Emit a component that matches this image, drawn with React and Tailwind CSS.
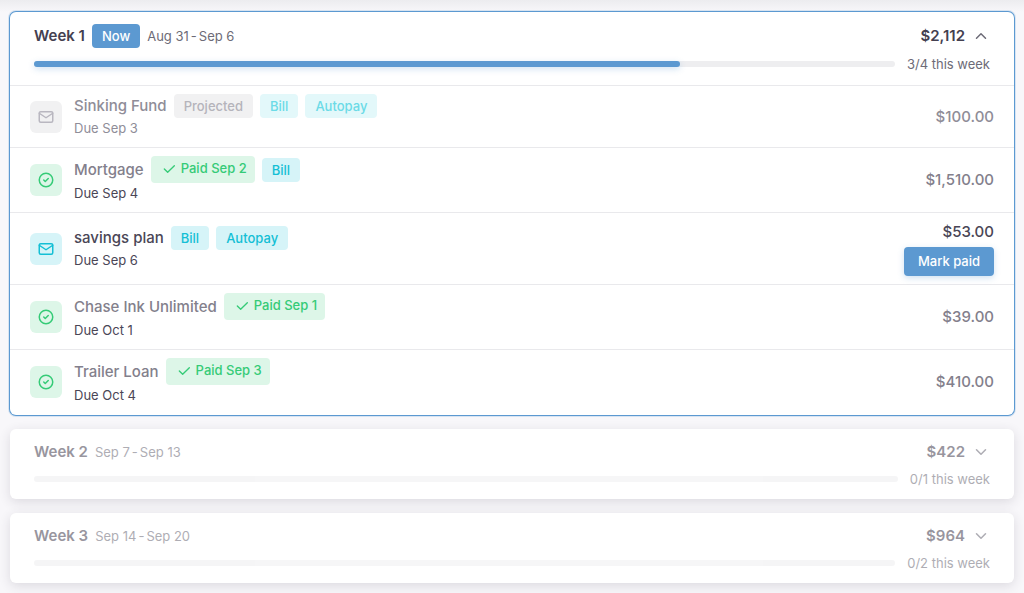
import React from 'react';
import { TbCheck, TbChevronDown, TbChevronUp, TbCircleCheck, TbMail } from 'react-icons/tb';

const weeks = [
  {
    title: 'Week 1',
    start: 'Aug 31',
    end: 'Sep 6',
    total: '$2,112',
    paid: 3,
    count: 4,
    current: true,
    items: [
      { name: 'Sinking Fund', due: 'Due Sep 3', amount: '$100.00', status: 'projected', tags: ['Bill', 'Autopay'] },
      { name: 'Mortgage', due: 'Due Sep 4', amount: '$1,510.00', status: 'paid', paidOn: 'Sep 2', tags: ['Bill'] },
      { name: 'savings plan', due: 'Due Sep 6', amount: '$53.00', status: 'open', tags: ['Bill', 'Autopay'] },
      { name: 'Chase Ink Unlimited', due: 'Due Oct 1', amount: '$39.00', status: 'paid', paidOn: 'Sep 1', tags: [] },
      { name: 'Trailer Loan', due: 'Due Oct 4', amount: '$410.00', status: 'paid', paidOn: 'Sep 3', tags: [] },
    ],
  },
  { title: 'Week 2', start: 'Sep 7', end: 'Sep 13', total: '$422', paid: 0, count: 1, items: [] },
  { title: 'Week 3', start: 'Sep 14', end: 'Sep 20', total: '$964', paid: 0, count: 2, items: [] },
];

const iconStyles = {
  projected: 'bg-[#f1f1f2] text-[#b9b7c0]',
  paid: 'bg-[#ddf6e8] text-[#35cb77]',
  open: 'bg-[#d6f4f8] text-[#14bfd5]',
};

const nameStyles = {
  projected: 'text-[#8f8d98]',
  paid: 'text-[#83808c]',
  open: 'text-[#4a4656]',
};

const BillRow = ({ item }) => {
  const projected = item.status === 'projected';
  const open = item.status === 'open';

  return (
    <li className="flex items-center gap-3 border-t border-[#e9e9ec] px-5 py-2 last:pb-[9px]">
      <div className={`flex h-8 w-8 shrink-0 items-center justify-center rounded-md ${iconStyles[item.status]}`}>
        {item.status === 'paid' ? <TbCircleCheck className="h-[18px] w-[18px]" /> : <TbMail className="h-[18px] w-[18px]" />}
      </div>

      <div className="min-w-0 flex-1">
        <div className="flex items-center gap-[7px]">
          <span className={`text-[15px] leading-[22px] font-medium ${nameStyles[item.status]}`}>{item.name}</span>
          {projected && (
            <span className="rounded bg-[#f1f1f2] px-2.5 text-[13px] leading-6 font-medium text-[#b5b4bb]">Projected</span>
          )}
          {item.paidOn && (
            <span className="flex h-[27px] items-center gap-1 rounded bg-[#ddf6e8] pr-2 pb-0.5 pl-2.5 text-[13px] font-medium text-[#35cb77]">
              <TbCheck className="h-4 w-4" />
              Paid {item.paidOn}
            </span>
          )}
          {item.tags.map((tag) => (
            <span
              key={tag}
              className={`rounded px-2.5 text-[13px] leading-6 font-medium ${
                projected ? 'bg-[#e3f8fa] text-[#6cdbe7]' : 'bg-[#d6f4f8] text-[#14bfd5]'
              }`}
            >
              {tag}
            </span>
          ))}
        </div>
        <p className={`text-[13px] leading-[21px] ${projected ? 'text-[#8f8d98]' : 'text-[#4a4656]'}`}>{item.due}</p>
      </div>

      <div className="flex flex-col items-end gap-1">
        <span className={`text-[15px] leading-[22px] font-medium ${nameStyles[item.status]}`}>{item.amount}</span>
        {open && (
          <button
            type="button"
            className="h-[29px] rounded bg-[#5c99d1] px-3.5 text-[13px] font-medium text-white shadow-[0_2px_6px_rgba(92,153,209,0.3)]"
          >
            Mark paid
          </button>
        )}
      </div>
    </li>
  );
};

const WeekCard = ({ week }) => {
  const Chevron = week.current ? TbChevronUp : TbChevronDown;

  return (
    <section
      className={`rounded-md bg-white ${
        week.current
          ? 'ring-1 ring-[#5c99d1] shadow-[0_0_0_2px_rgba(92,153,209,0.2)]'
          : 'shadow-[0_3px_12px_rgba(47,43,61,0.14)]'
      }`}
    >
      <button
        type="button"
        aria-expanded={!!week.current}
        className={`block w-full px-6 pt-3 text-left ${week.current ? 'pb-[11px]' : 'pb-2.5 opacity-55'}`}
      >
        <span className="flex items-center gap-[7px]">
          <span className="text-[15px] leading-[22px] font-semibold text-[#444050]">{week.title}</span>
          {week.current && (
            <span className="rounded bg-[#5c99d1] px-2.5 text-[13px] leading-6 font-medium text-white">Now</span>
          )}
          <span className="flex gap-0.5 text-[13px] leading-5 text-[#6d6b77]">
            <span>{week.start}</span>
            <span>-</span>
            <span>{week.end}</span>
          </span>
          <span className="ml-auto text-[15px] leading-[22px] font-semibold text-[#444050]">{week.total}</span>
          <Chevron className="h-[18px] w-[18px] text-[#6d6b77]" />
        </span>
        <span className="mt-1.5 flex items-center gap-3">
          <span className="h-1.5 flex-1 rounded-full bg-[#eeeef0]">
            {week.paid > 0 && (
              <span
                className="block h-full rounded-full bg-[#5c99d1] shadow-[0_2px_6px_rgba(92,153,209,0.3)]"
                style={{ width: `${(week.paid / week.count) * 100}%` }}
              />
            )}
          </span>
          <span className="text-[13px] leading-5 text-[#6d6b77]">
            {week.paid}/{week.count} this week
          </span>
        </span>
      </button>

      {week.items.length > 0 && (
        <ul>
          {week.items.map((item) => (
            <BillRow key={item.name} item={item} />
          ))}
        </ul>
      )}
    </section>
  );
};

const App = () => (
  <main className="min-h-screen bg-[#f8f7fa] font-['Inter','Liberation_Sans',sans-serif]">
    <div className="h-3 bg-linear-to-b from-[#ececef] to-[#f8f7fa]" />
    <div className="flex flex-col gap-3.5 px-2.5 pb-2">
      {weeks.map((week) => (
        <WeekCard key={week.title} week={week} />
      ))}
    </div>
  </main>
);

export default App;
